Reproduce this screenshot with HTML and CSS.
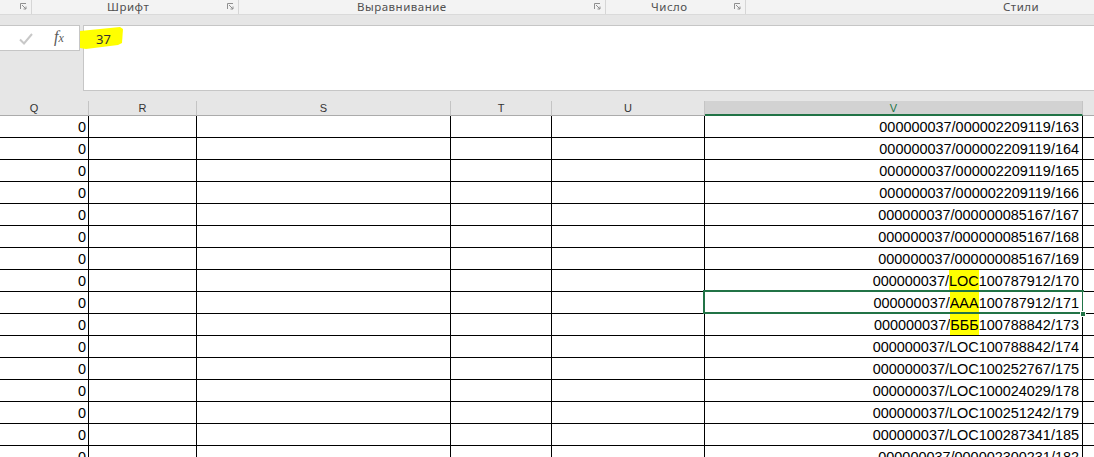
FILE: index.html
```html
<!DOCTYPE html>
<html lang="ru">
<head>
<meta charset="utf-8">
<link rel="stylesheet" href="styles.css">
</head>
<body>
<div class="app">
  <div class="ribbon">
    <div class="grp g1"><span class="launch"><svg width="7" height="7" viewBox="0 0 7 7"><path d="M0.5 6 V0.5 H6" fill="none" stroke="#8f8f8f"/><path d="M2 2 L6 6 M6 3.5 V6 H3.5" fill="none" stroke="#8f8f8f"/></svg></span></div>
    <div class="grp g2"><span class="lbl">Шрифт</span><span class="launch"><svg width="7" height="7" viewBox="0 0 7 7"><path d="M0.5 6 V0.5 H6" fill="none" stroke="#8f8f8f"/><path d="M2 2 L6 6 M6 3.5 V6 H3.5" fill="none" stroke="#8f8f8f"/></svg></span></div>
    <div class="grp g3"><span class="lbl">Выравнивание</span><span class="launch"><svg width="7" height="7" viewBox="0 0 7 7"><path d="M0.5 6 V0.5 H6" fill="none" stroke="#8f8f8f"/><path d="M2 2 L6 6 M6 3.5 V6 H3.5" fill="none" stroke="#8f8f8f"/></svg></span></div>
    <div class="grp g4"><span class="lbl">Число</span><span class="launch"><svg width="7" height="7" viewBox="0 0 7 7"><path d="M0.5 6 V0.5 H6" fill="none" stroke="#8f8f8f"/><path d="M2 2 L6 6 M6 3.5 V6 H3.5" fill="none" stroke="#8f8f8f"/></svg></span></div>
    <div class="grp g5"><span class="lbl">Стили</span></div>
  </div>

  <div class="fbar">
    <div class="namebox">
      <svg class="check" width="14" height="12" viewBox="0 0 14 12"><path d="M1 6.5 L5 10.5 L13 1" fill="none" stroke="#c8c8c8" stroke-width="2"/></svg>
      <span class="fx"><i>f</i><i class="fxx">x</i></span>
    </div>
    <div class="finput"><span class="val">37</span></div>
    <svg class="marker" width="130" height="30" viewBox="0 0 130 30"><polygon points="80,6 90,5 120,2 123,4 122,18 118,20 86,24 80,23" fill="#ffff00"/></svg>
  </div>

  <div class="sheet">
    <div class="row hdr">
      <div class="hc hq">Q</div>
      <div class="hc">R</div>
      <div class="hc">S</div>
      <div class="hc">T</div>
      <div class="hc">U</div>
      <div class="hc hsel">V</div>
      <div class="hc hw"></div>
    </div>

    <div class="row"><div class="c num">0</div><div class="c"></div><div class="c"></div><div class="c"></div><div class="c"></div><div class="c txt">000000037/000002209119/163</div><div class="c w"></div></div>
    <div class="row"><div class="c num">0</div><div class="c"></div><div class="c"></div><div class="c"></div><div class="c"></div><div class="c txt">000000037/000002209119/164</div><div class="c w"></div></div>
    <div class="row"><div class="c num">0</div><div class="c"></div><div class="c"></div><div class="c"></div><div class="c"></div><div class="c txt">000000037/000002209119/165</div><div class="c w"></div></div>
    <div class="row"><div class="c num">0</div><div class="c"></div><div class="c"></div><div class="c"></div><div class="c"></div><div class="c txt">000000037/000002209119/166</div><div class="c w"></div></div>
    <div class="row"><div class="c num">0</div><div class="c"></div><div class="c"></div><div class="c"></div><div class="c"></div><div class="c txt">000000037/000000085167/167</div><div class="c w"></div></div>
    <div class="row"><div class="c num">0</div><div class="c"></div><div class="c"></div><div class="c"></div><div class="c"></div><div class="c txt">000000037/000000085167/168</div><div class="c w"></div></div>
    <div class="row"><div class="c num">0</div><div class="c"></div><div class="c"></div><div class="c"></div><div class="c"></div><div class="c txt">000000037/000000085167/169</div><div class="c w"></div></div>
    <div class="row"><div class="c num">0</div><div class="c"></div><div class="c"></div><div class="c"></div><div class="c"></div><div class="c txt">000000037/<span class="hl">LOC</span>100787912/170</div><div class="c w"></div></div>
    <div class="row"><div class="c num">0</div><div class="c"></div><div class="c"></div><div class="c"></div><div class="c"></div><div class="c txt sel">000000037/<span class="hl">ААА</span>100787912/171<span class="handle"></span></div><div class="c w"></div></div>
    <div class="row"><div class="c num">0</div><div class="c"></div><div class="c"></div><div class="c"></div><div class="c"></div><div class="c txt">000000037/<span class="hl">БББ</span>100788842/173</div><div class="c w"></div></div>
    <div class="row"><div class="c num">0</div><div class="c"></div><div class="c"></div><div class="c"></div><div class="c"></div><div class="c txt">000000037/LOC100788842/174</div><div class="c w"></div></div>
    <div class="row"><div class="c num">0</div><div class="c"></div><div class="c"></div><div class="c"></div><div class="c"></div><div class="c txt">000000037/LOC100252767/175</div><div class="c w"></div></div>
    <div class="row"><div class="c num">0</div><div class="c"></div><div class="c"></div><div class="c"></div><div class="c"></div><div class="c txt">000000037/LOC100024029/178</div><div class="c w"></div></div>
    <div class="row"><div class="c num">0</div><div class="c"></div><div class="c"></div><div class="c"></div><div class="c"></div><div class="c txt">000000037/LOC100251242/179</div><div class="c w"></div></div>
    <div class="row"><div class="c num">0</div><div class="c"></div><div class="c"></div><div class="c"></div><div class="c"></div><div class="c txt">000000037/LOC100287341/185</div><div class="c w"></div></div>
    <div class="row"><div class="c num">0</div><div class="c"></div><div class="c"></div><div class="c"></div><div class="c"></div><div class="c txt">000000037/000002300231/182</div><div class="c w"></div></div>
  </div>
</div>
</body>
</html>
```

FILE: styles.css
```css
* { box-sizing: border-box; }
html, body { margin: 0; padding: 0; }
body {
  width: 1094px;
  height: 457px;
  overflow: hidden;
  background: #e6e6e6;
  font-family: "Liberation Sans", Arial, sans-serif;
}
.app { width: 1094px; height: 457px; overflow: hidden; }

/* ribbon group labels */
.ribbon {
  display: flex;
  height: 15px;
  background: #f3f3f3;
  border-bottom: 1px solid #dadada;
}
.grp {
  display: flex;
  align-items: center;
  height: 14px;
  border-right: 1px solid #d6d6d6;
}
.g1 { width: 32px; }
.g2 { width: 207px; padding-left: 75px; }
.g3 { width: 367px; padding-left: 118px; }
.g4 { width: 140px; padding-left: 45px; }
.g5 { flex: 1; padding-left: 257px; border-right: none; }
.lbl {
  font-family: "Noto Sans", "Open Sans", sans-serif;
  font-size: 11.5px;
  letter-spacing: 0.5px;
  line-height: 14px;
  color: #505050;
  white-space: nowrap;
}
.launch {
  margin-left: auto;
  margin-right: 4px;
  width: 7px;
  height: 7px;
  display: flex;
  margin-top: -1px;
}
.launch svg { display: block; }

/* formula bar */
.fbar {
  position: relative;
  display: flex;
  align-items: flex-start;
  margin-top: 10px;
  height: 66px;
}
.namebox {
  width: 80px;
  height: 26px;
  background: #fff;
  border: 1px solid #c6c6c6;
  border-left: none;
  display: flex;
  align-items: center;
  padding-left: 19px;
}
.check { display: block; margin-top: 1px; }
.fx {
  margin-left: 21px;
  font-family: "Liberation Serif", serif;
  font-size: 16px;
  color: #5a5a5a;
  line-height: 1;
  margin-top: -2px;
}
.fxx { font-size: 12px; }
.finput {
  flex: 1;
  margin-left: 3px;
  height: 66px;
  background: #fff;
  border: 1px solid #c6c6c6;
  border-right: none;
  padding: 4px 0 0 12px;
}
.val {
  position: relative;
  z-index: 2;
  font-family: "Noto Sans", "Open Sans", sans-serif;
  font-size: 13px;
  line-height: 16px;
  color: #333;
}
.marker {
  position: absolute;
  left: 0;
  top: 0;
  z-index: 1;
}

/* sheet */
.sheet { margin-top: 10px; }
.row {
  display: grid;
  grid-template-columns: 89px 108px 254px 101px 153px 378px 11px;
  height: 22px;
}
.hdr { height: 15px; }
.hc {
  height: 15px;
  border-right: 1px solid #c4c4c4;
  border-bottom: 1px solid #ababab;
  font-size: 11px;
  line-height: 14px;
  text-align: center;
  color: #333;
}
.hq { padding-right: 20px; }
.hsel {
  background: #d2d2d2;
  border-bottom: 2px solid #217346;
  color: #217346;
}
.hw { border-right: none; }

.c {
  position: relative;
  height: 22px;
  border-right: 1px solid #000;
  border-bottom: 1px solid #000;
  background: #fff;
  font-size: 14.45px;
  line-height: 19px;
  padding-top: 2px;
  color: #000;
  white-space: nowrap;
  text-align: right;
}
.c.w { border-right: none; }
.num { padding-right: 2px; }
.txt { padding-right: 3px; }
.hl {
  background: #ffff00;
  padding: 3px 0 2px;
}
.sel::after {
  content: "";
  position: absolute;
  left: -2px;
  top: -2px;
  right: -2px;
  bottom: -1px;
  border: 2px solid #217346;
  pointer-events: none;
}
.handle {
  position: absolute;
  right: -4px;
  bottom: -4px;
  width: 6px;
  height: 6px;
  background: #217346;
  border: 1px solid #fff;
  z-index: 3;
}
```
